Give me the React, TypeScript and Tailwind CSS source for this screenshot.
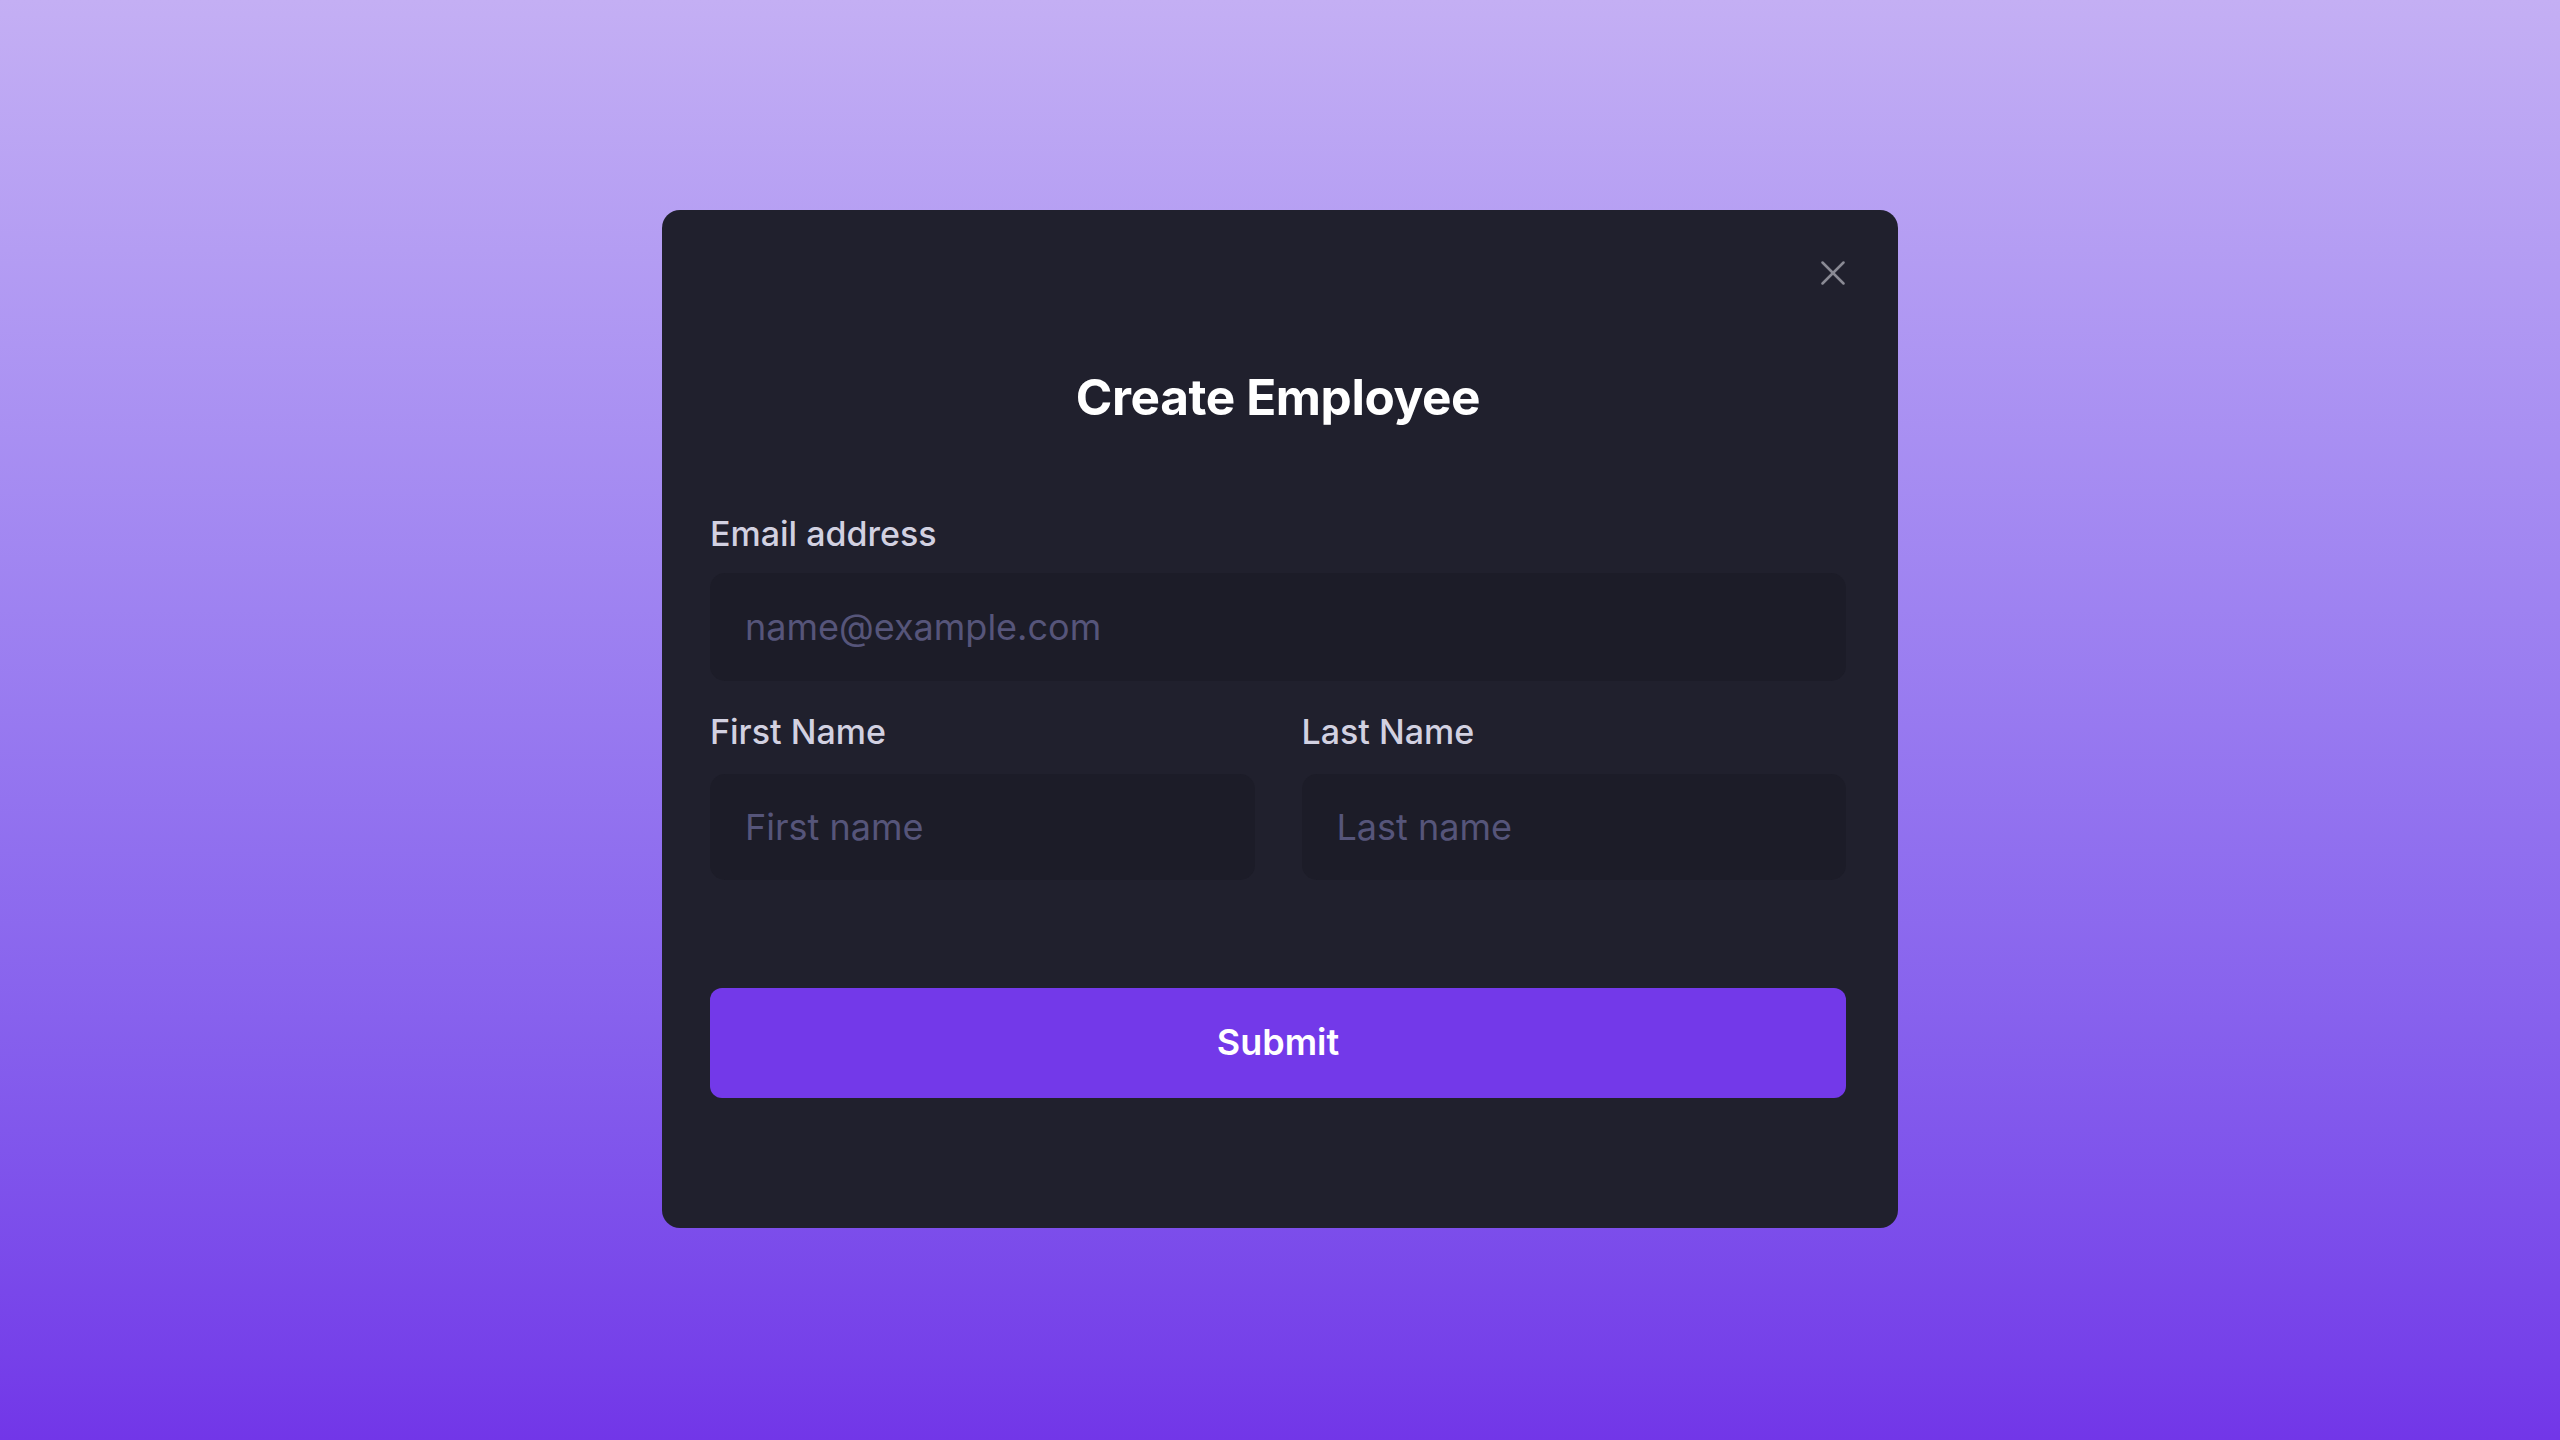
import React from "react";

export default function App() {
  return (
    <div
      className="w-full min-h-screen flex items-start justify-center pt-[210px] bg-gradient-to-b from-[#c4aff4] to-[#7236e8]"
      style={{ fontFamily: "Inter, 'Noto Sans', sans-serif" }}
    >
      <div className="relative w-[1236px] rounded-[18px] bg-[#20202d] pl-[48px] pr-[52px] pt-[163px] pb-[130px]">
        <button
          type="button"
          aria-label="Close"
          className="absolute top-[51px] right-[53px] w-[24px] h-[24px] flex items-center justify-center text-[#8a8a94]"
        >
          <svg width="24" height="24" viewBox="0 0 24 24" fill="none" stroke="currentColor" strokeWidth="2.5" strokeLinecap="round">
            <path d="M1.5 1.5 L22.5 22.5" />
            <path d="M22.5 1.5 L1.5 22.5" />
          </svg>
        </button>

        <h1 className="text-center text-white font-bold text-[49.5px] leading-none tracking-[-0.4px]">
          Create Employee
        </h1>

        <div className="mt-[94px] flex flex-col">
          <label className="text-[34px] leading-none font-medium text-[#d2d1e1] mb-[22px]">
            Email address
          </label>
          <input
            type="email"
            placeholder="name@example.com"
            className="h-[108px] w-full rounded-[15px] bg-[#1c1c28] px-[35px] text-[36px] text-white placeholder:text-[#56557a] outline-none"
          />
        </div>

        <div className="mt-[34px] grid grid-cols-2 gap-[47px]">
          <div className="flex flex-col">
            <label className="text-[34px] leading-none font-medium text-[#d2d1e1] mb-[25px]">
              First Name
            </label>
            <input
              type="text"
              placeholder="First name"
              className="h-[106px] w-full rounded-[15px] bg-[#1c1c28] px-[35px] text-[36px] text-white placeholder:text-[#56557a] outline-none"
            />
          </div>
          <div className="flex flex-col">
            <label className="text-[34px] leading-none font-medium text-[#d2d1e1] mb-[25px]">
              Last Name
            </label>
            <input
              type="text"
              placeholder="Last name"
              className="h-[106px] w-full rounded-[15px] bg-[#1c1c28] px-[35px] text-[36px] text-white placeholder:text-[#56557a] outline-none"
            />
          </div>
        </div>

        <button
          type="button"
          className="mt-[108px] w-full h-[110px] rounded-[12px] bg-[#7339e9] text-white text-[36px] font-semibold pb-[2px]"
        >
          Submit
        </button>
      </div>
    </div>
  );
}
